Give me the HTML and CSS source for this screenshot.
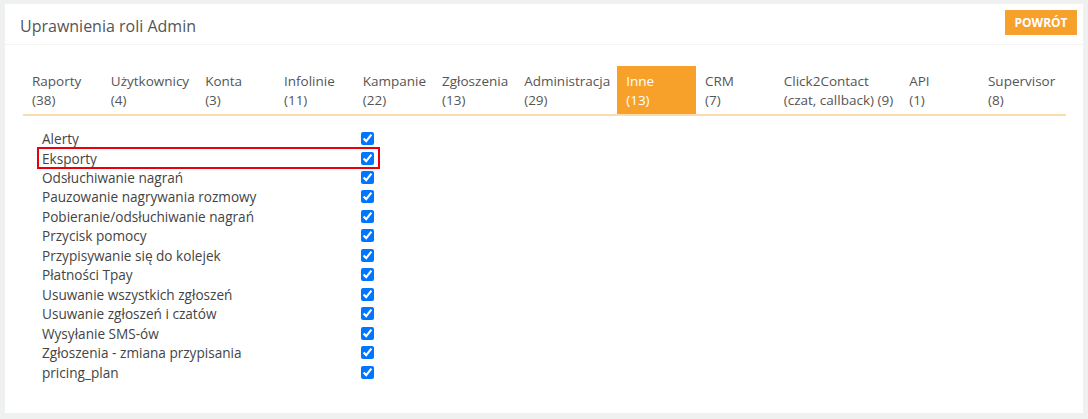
FILE: index.html
```html
<!DOCTYPE html>
<html lang="pl">
<head>
    <meta charset="UTF-8">
    <meta name="viewport" content="width=device-width, initial-scale=1.0">
    <title>Uprawnienia roli Admin</title>
    <link rel="stylesheet" href="styles.css">
</head>
<body>

    <div class="panel">
        <div class="panel-header">
            <h2>Uprawnienia roli Admin</h2>
            <button class="btn-back">Powrót</button>
        </div>

        <div class="panel-body">
            <ul class="tabs">
                <li>Raporty<br>(38)</li>
                <li>Użytkownicy<br>(4)</li>
                <li>Konta<br>(3)</li>
                <li>Infolinie<br>(11)</li>
                <li>Kampanie<br>(22)</li>
                <li>Zgłoszenia<br>(13)</li>
                <li>Administracja<br>(29)</li>
                <li class="active">Inne<br>(13)</li>
                <li>CRM<br>(7)</li>
                <li>Click2Contact<br>(czat, callback) (9)</li>
                <li>API<br>(1)</li>
                <li>Supervisor<br>(8)</li>
            </ul>

            <div class="perms">
                <label class="perm">Alerty <input type="checkbox" checked></label>
                <label class="perm highlight">Eksporty <input type="checkbox" checked></label>
                <label class="perm">Odsłuchiwanie nagrań <input type="checkbox" checked></label>
                <label class="perm">Pauzowanie nagrywania rozmowy <input type="checkbox" checked></label>
                <label class="perm">Pobieranie/odsłuchiwanie nagrań <input type="checkbox" checked></label>
                <label class="perm">Przycisk pomocy <input type="checkbox" checked></label>
                <label class="perm">Przypisywanie się do kolejek <input type="checkbox" checked></label>
                <label class="perm">Płatności Tpay <input type="checkbox" checked></label>
                <label class="perm">Usuwanie wszystkich zgłoszeń <input type="checkbox" checked></label>
                <label class="perm">Usuwanie zgłoszeń i czatów <input type="checkbox" checked></label>
                <label class="perm">Wysyłanie SMS-ów <input type="checkbox" checked></label>
                <label class="perm">Zgłoszenia - zmiana przypisania <input type="checkbox" checked></label>
                <label class="perm">pricing_plan <input type="checkbox" checked></label>
            </div>
        </div>
    </div>

</body>
</html>
```

FILE: styles.css
```css
* {
    margin: 0;
    padding: 0;
    box-sizing: border-box;
    font-family: "Open Sans", Arial, sans-serif;
}

body {
    background-color: #eff0f0;
    padding: 4px 5px 6px 5px;
    color: #555;
}

.panel {
    background: #fff;
    height: 409px;
}

.panel-header {
    height: 41px;
    display: flex;
    align-items: center;
    justify-content: space-between;
    padding: 0 6px 0 15px;
    border-bottom: 1px solid #f4f4f4;
}

.panel-header h2 {
    padding-top: 3px;
    font-size: 16px;
    font-weight: 400;
    color: #555;
}

.btn-back {
    width: 72px;
    height: 25px;
    margin-top: -4px;
    background: #f7a12b;
    border: 1px solid #f3a23a;
    color: #fff;
    font-size: 12px;
    font-weight: 700;
    text-transform: uppercase;
    cursor: pointer;
}

.panel-body {
    padding: 21px 17px 0 18px;
}

/* Tabs */
.tabs {
    list-style: none;
    display: flex;
    border-bottom: 2px solid #fcdcad;
}

.tabs li {
    min-width: 78.8px;
    padding: 6px 7px 4px 9px;
    font-size: 13.5px;
    line-height: 19px;
    white-space: nowrap;
    color: #555;
    cursor: pointer;
}

.tabs li.active {
    background: #f7a12b;
    color: #fff;
}

/* Permission list */
.perms {
    width: 341px;
    margin: 12.5px 0 0 15px;
}

.perm {
    display: flex;
    align-items: center;
    justify-content: space-between;
    height: 19.5px;
    padding: 0 5px 0 4px;
    font-size: 13.6px;
    color: #444;
}

.perm input {
    width: 13px;
    height: 13px;
    margin: 0;
    accent-color: #0075ff;
}

.perm.highlight {
    height: 20px;
    margin-bottom: -0.5px;
    outline: 2px solid #e8000b;
    outline-offset: -1px;
}
```
